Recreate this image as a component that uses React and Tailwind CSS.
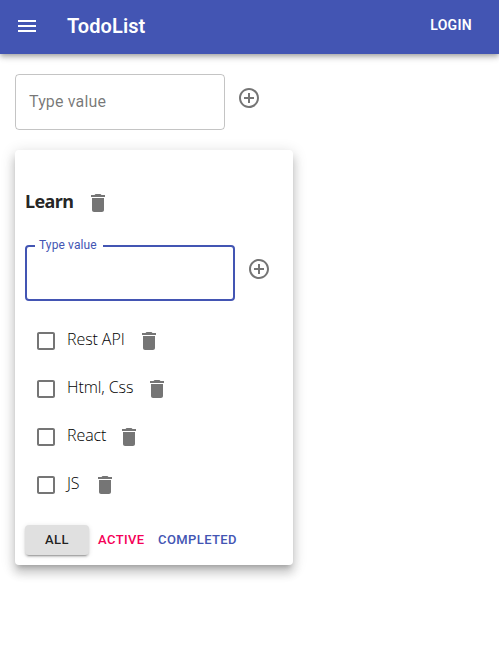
import React from 'react';

function Icon({ d, className = '' }) {
  return (
    <svg viewBox="0 0 24 24" className={`h-6 w-6 shrink-0 fill-current ${className}`} aria-hidden="true">
      <path d={d} />
    </svg>
  );
}

const MENU = 'M3 18h18v-2H3v2zm0-5h18v-2H3v2zm0-7v2h18V6H3z';
const ADD =
  'M13 7h-2v4H7v2h4v4h2v-4h4v-2h-4V7zm-1-5C6.48 2 2 6.48 2 12s4.48 10 10 10 10-4.48 10-10S17.52 2 12 2zm0 18c-4.41 0-8-3.59-8-8s3.59-8 8-8 8 3.59 8 8-3.59 8-8 8z';
const TRASH = 'M6 19c0 1.1.9 2 2 2h8c1.1 0 2-.9 2-2V7H6v12zM19 4h-3.5l-1-1h-5l-1 1H5v2h14V4z';
const BOX =
  'M19 5v14H5V5h14m0-2H5c-1.1 0-2 .9-2 2v14c0 1.1.9 2 2 2h14c1.1 0 2-.9 2-2V5c0-1.1-.9-2-2-2z';

const tasks = [
  { title: 'Rest API', width: 'w-[58px]' },
  { title: 'Html, Css', width: 'w-[66px]' },
  { title: 'React', width: 'w-[38px]' },
  { title: 'JS', width: 'w-[14px]' },
];

export default function App() {
  return (
    <div className="min-h-[649px] w-full overflow-hidden bg-white font-['Roboto',sans-serif] text-black/87">
      <header className="flex h-[54px] items-center bg-[#4355b3] pr-[27px] pb-[2px] pl-[15px] text-white shadow-[0px_2px_4px_-1px_rgba(0,0,0,0.2),0px_4px_5px_0px_rgba(0,0,0,0.14),0px_1px_10px_0px_rgba(0,0,0,0.12)]">
        <button type="button" aria-label="Menu">
          <Icon d={MENU} />
        </button>
        <h6 className="ml-7 grow text-xl leading-8 font-semibold tracking-[0.08px]">TodoList</h6>
        <button type="button" className="pb-[2px] text-sm leading-6 font-semibold tracking-[0.3px]">
          LOGIN
        </button>
      </header>

      <main className="px-[15px] pt-5">
        <div className="flex h-14 items-center">
          <div className="flex h-14 w-[210px] items-center rounded border border-black/23 px-[13px] text-base tracking-[0.15px] text-black/54">
            Type value
          </div>
          <button type="button" aria-label="Add list" className="relative -top-1 ml-3 text-black/54">
            <Icon d={ADD} />
          </button>
        </div>

        <section className="mt-5 flex h-[415px] w-[278px] flex-col rounded bg-white px-[10px] pt-[41px] shadow-[0px_5px_5px_-3px_rgba(0,0,0,0.2),0px_8px_10px_1px_rgba(0,0,0,0.14),0px_3px_14px_2px_rgba(0,0,0,0.12)]">
          <div className="flex h-6 items-center">
            <h3 className="w-[61px] pb-[5px] font-['Noto_Sans',sans-serif] text-[18px] leading-6 font-bold tracking-[-0.6px] whitespace-nowrap">
              Learn
            </h3>
            <button type="button" aria-label="Delete list" className="text-black/54">
              <Icon d={TRASH} />
            </button>
          </div>

          <div className="mt-[30px] flex h-14 items-center">
            <div className="relative h-14 w-[210px] rounded border-2 border-[#4355b3]">
              <span className="absolute -top-[10px] left-2 w-[68px] bg-white pl-1 text-xs leading-4 tracking-[0.11px] whitespace-nowrap text-[#4355b3]">
                Type value
              </span>
            </div>
            <button type="button" aria-label="Add task" className="relative -top-1 ml-3 text-black/54">
              <Icon d={ADD} />
            </button>
          </div>

          <ul className="mt-4">
            {tasks.map((task) => (
              <li key={task.title} className="flex h-12 items-center pl-[9px]">
                <Icon d={BOX} className="text-black/54" />
                <span
                  className={`${task.width} mr-3 ml-[9px] pb-[4px] font-['Open_Sans',sans-serif] text-base leading-6 font-light tracking-[-0.08px] whitespace-nowrap text-black`}
                >
                  {task.title}
                </span>
                <button type="button" aria-label="Delete task" className="text-black/54">
                  <Icon d={TRASH} />
                </button>
              </li>
            ))}
          </ul>

          <div className="mt-4 flex h-[30px] items-center text-[13px] leading-5 font-medium tracking-[0.4px]">
            <button
              type="button"
              className="h-[30px] w-16 rounded bg-[#e0e0e0] shadow-[0px_3px_1px_-2px_rgba(0,0,0,0.2),0px_2px_2px_0px_rgba(0,0,0,0.14),0px_1px_5px_0px_rgba(0,0,0,0.12)]"
            >
              ALL
            </button>
            <button type="button" className="ml-[9px] w-[60px] text-left text-[#f50057]">
              ACTIVE
            </button>
            <button type="button" className="text-[#4355b3]">
              COMPLETED
            </button>
          </div>
        </section>
      </main>
    </div>
  );
}
